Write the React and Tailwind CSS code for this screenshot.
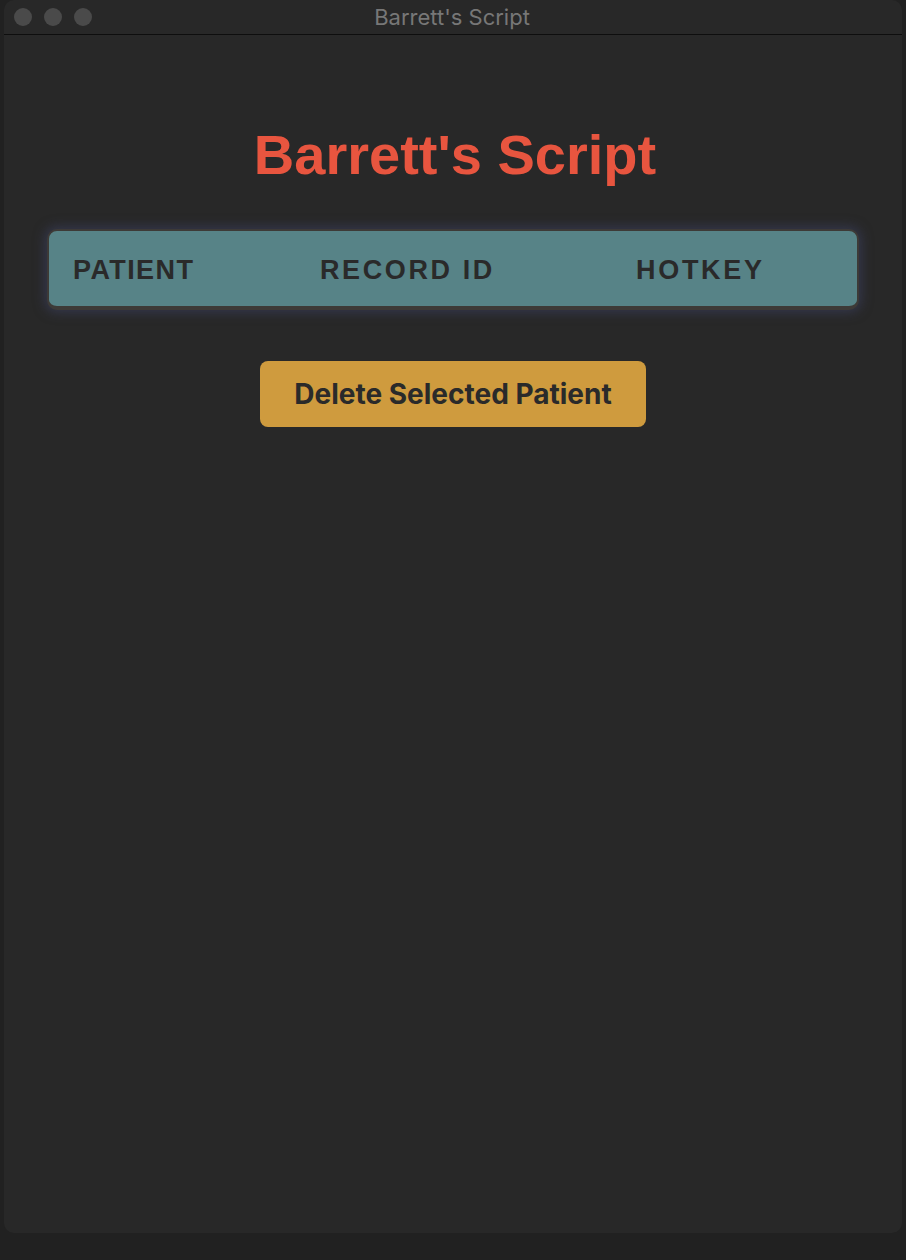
import React from "react";

const columns = [
  { label: "PATIENT", width: "w-[247px]", tracking: "tracking-[1.4px]" },
  { label: "RECORD ID", width: "w-[316px]", tracking: "tracking-[2.6px]" },
  { label: "HOTKEY", width: "flex-1", tracking: "tracking-[2.7px]" },
];

const TrafficLights = () => (
  <div className="flex items-center gap-[12px] pl-[10px]">
    <span className="w-[18px] h-[18px] rounded-full bg-[#4a4a4a]" />
    <span className="w-[18px] h-[18px] rounded-full bg-[#4a4a4a]" />
    <span className="w-[18px] h-[18px] rounded-full bg-[#4a4a4a]" />
  </div>
);

export default function App() {
  return (
    <div className="w-[906px] h-[1260px] bg-[#212121] px-[4px] pb-[27px] flex">
      <div className="flex-1 flex flex-col rounded-[10px] bg-[#282828] overflow-hidden">
        {/* title bar */}
        <div className="relative h-[35px] shrink-0 flex items-center border-b border-[#0e0e0e]">
          <TrafficLights />
          <div className="absolute inset-0 flex items-center justify-center text-[22px] text-[#777777] font-['Inter',sans-serif] pr-[2px]">
            Barrett's Script
          </div>
        </div>

        <main className="flex-1 flex flex-col items-center">
          <h1 className="mt-[92px] text-[56px] leading-[56px] font-bold text-[#e8553f] font-['Liberation_Sans',Arial,sans-serif] pl-[4px]">
            Barrett's Script
          </h1>

          <div className="w-full px-[43px] mt-[46px]">
            <div className="flex items-center h-[81px] pt-[3px] rounded-[10px] bg-[#578387] border-2 border-b-[4px] border-[#3d3a37] shadow-[0_0_12px_2px_rgba(64,70,110,0.55)]">
              {columns.map((col) => (
                <div
                  key={col.label}
                  className={`${col.width} ${col.tracking} pl-[24px] text-[27px] font-bold text-[#2a2a2a] font-['Liberation_Sans',Arial,sans-serif]`}
                >
                  {col.label}
                </div>
              ))}
            </div>
          </div>

          <button className="mt-[51px] w-[386px] h-[66px] rounded-[8px] bg-[#cf9b3e] text-[#2a2a2a] text-[28px] font-bold font-['Inter',sans-serif]">
            Delete Selected Patient
          </button>
        </main>
      </div>
    </div>
  );
}
